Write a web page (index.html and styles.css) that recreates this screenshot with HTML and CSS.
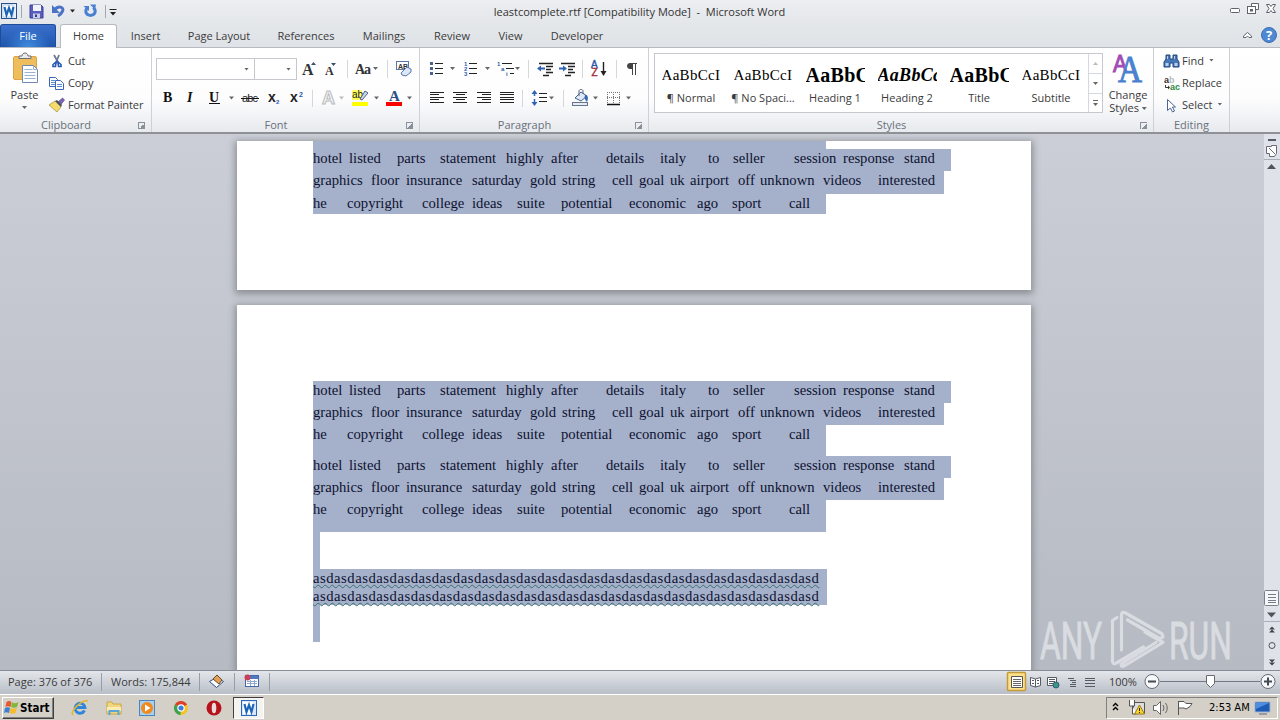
FILE: index.html
```html
<!DOCTYPE html>
<html lang="en">
<head>
    <meta charset="UTF-8">
    <meta name="viewport" content="width=device-width, initial-scale=1.0">
    <title>leastcomplete.rtf - Microsoft Word</title>
    <link rel="stylesheet" href="styles.css">
</head>
<body>
    <div class="window">
        <header class="titlebar">
            <svg class="quick" width="120" height="24" viewBox="0 0 120 24">
                <rect x="1.500" y="3.500" width="15" height="15" fill="#eaf3fc" stroke="#2b4f88"/>
                <path d="M3 5h10v12H3z" fill="#fff" stroke="#8fb2de" stroke-width=".6"/>
                <path d="M4.500 7l2 8 2.500-7 2.500 7 2-8" fill="none" stroke="#1c66b8" stroke-width="2.200"/>
                <path d="M21.500 5v13M105.500 5v13" stroke="#a3a7ae"/>
                <path d="M30 5h11l2 2v11H30z" fill="#5a5dbd" stroke="#3c3f95"/>
                <path d="M33 5h8v6h-8z" fill="#f1f3fa"/>
                <path d="M33 13.500h7V18h-7z" fill="#c9cde8"/>
                <path d="M35 14.500h2V17h-2z" fill="#34398e"/>
                <path d="M55 9c5-4 10-1 7 3-1 2-2 3-4 4" fill="none" stroke="#4a73c6" stroke-width="3"/>
                <path d="M52 5v8h8z" fill="#4a73c6"/>
                <path d="M70 9.500h5l-2.500 3zM110 12h6l-3 3.500z" fill="#222"/>
                <path d="M109.500 9.500h7" stroke="#222"/>
                <path d="M87.500 7.500c-4 5 0 8 3 8s7-3 3-8" fill="none" stroke="#4a80d4" stroke-width="3"/>
                <path d="M90 4.500h6l-1 5z M83.500 6h5.500v5z" fill="#4a80d4"/>
            </svg>
            <div class="window-title">leastcomplete.rtf [Compatibility Mode]&nbsp; -&nbsp; Microsoft Word</div>
            <svg width="52" height="24" viewBox="0 0 52 24" fill="none" stroke="#5c6470">
                <rect x="2.500" y="8.500" width="9" height="4" rx="1" fill="#fff"/>
                <path d="M23.500 6.500v-3h7v6h-3" fill="#fff"/>
                <rect x="19.500" y="6.500" width="8" height="7" fill="#fff"/>
                <rect x="22.500" y="9.500" width="2" height="1.500"/>
                <path d="M38.500 4.500h3l1.500 2 1.500-2h3l-2.500 4 2.500 4h-3l-1.500-2-1.500 2h-3l2.500-4z" fill="#fff"/>
            </svg>
        </header>

        <nav class="tabs">
            <div class="tab tab-file">File</div>
            <div class="tab tab-home">Home</div>
            <div class="tab tab-insert">Insert</div>
            <div class="tab tab-layout">Page Layout</div>
            <div class="tab tab-references">References</div>
            <div class="tab tab-mailings">Mailings</div>
            <div class="tab tab-review">Review</div>
            <div class="tab tab-view">View</div>
            <div class="tab tab-developer">Developer</div>
            <svg class="help" width="40" height="23" viewBox="0 0 40 23">
                <path d="M3.500 13.500v-1.500l4-3.500 4 3.500v1.500h-2.500l-1.500-1.500-1.500 1.500z" fill="#fff" stroke="#5c6470"/>
                <circle cx="29" cy="11" r="7.500" fill="#4f88d2" stroke="#3d6fb4"/>
                <text x="29" y="15.500" text-anchor="middle" font-family="Open Sans, sans-serif" font-size="13" font-weight="bold" fill="#fff">?</text>
            </svg>
        </nav>

        <section class="ribbon">
            <div class="group group-clipboard">
                <div class="group-body">
                    <div class="paste">
                        <svg width="28" height="36" viewBox="0 0 28 36">
                            <rect x="2.500" y="4.500" width="23" height="23" rx="1.500" fill="#f0bd5c" stroke="#dda548"/>
                            <path d="M8 6.500V4h3c0-4 6-4 6 0h3v2.500z" fill="#e8e9ea" stroke="#6c6f72"/>
                            <path d="M11.500 13.500h11l4 4v13h-15z" fill="#fff" stroke="#6d88b3"/>
                            <path d="M22.500 13.500v4h4M13.500 17.500h8M13.500 20.500h11M13.500 23.500h11M13.500 26.500h11" fill="none" stroke="#9db2d3"/>
                        </svg>
                        <span>Paste</span>
                        <i class="caret"></i>
                    </div>
                    <div class="list">
                        <div class="cmd">
                            <svg width="18" height="18" viewBox="0 0 18 18" fill="none">
                                <path d="M5 3l5 9M10 3L6.500 12" stroke="#6f7c92" stroke-width="1.800"/>
                                <path d="M7 10l-3 2.500v2h2.500zM9 10l3 2.500v2H9.500z" stroke="#2659b8" stroke-width="1.600"/>
                            </svg>
                            <span>Cut</span>
                        </div>
                        <div class="cmd">
                            <svg width="18" height="18" viewBox="0 0 18 18" fill="#fff" stroke="#3967b5">
                                <path d="M.5 3.500h6l2 2v7h-8z"/>
                                <path d="M6.500 6.500h5l3 3v6h-8z"/>
                                <path d="M2 6.500h4M2 8.500h4M2 10.500h4M8 10.500h5M8 12.500h5" stroke="#5d8ad4"/>
                            </svg>
                            <span>Copy</span>
                        </div>
                        <div class="cmd">
                            <svg width="18" height="18" viewBox="0 0 18 18">
                                <path d="M9 6l4.500-4 2 2-4 5z" fill="#7c66b8" stroke="#473577" stroke-width=".6"/>
                                <path d="M0 9l6-4 6 6-4 5z" fill="#f3dc6b" stroke="#a48c35" stroke-width=".7"/>
                                <path d="M6 5l2-1 5 5-1 2z" fill="#4e525c"/>
                            </svg>
                            <span>Format Painter</span>
                        </div>
                    </div>
                </div>
                <div class="group-label"><span>Clipboard</span><i class="launcher"></i></div>
            </div>

            <div class="group group-font">
                <div class="group-body rows">
                    <div class="row">
                        <div class="combo combo-name"><i class="caret"></i></div>
                        <div class="combo combo-size"><i class="caret"></i></div>
                        <svg width="120" height="22" viewBox="297 58 120 22">
                            <g font-family="Liberation Serif, serif" font-weight="bold" fill="#333">
                                <text x="302" y="75" font-size="16">A</text>
                                <text x="325" y="75" font-size="12">A</text>
                                <text x="355" y="74" font-size="14" textLength="16">Aa</text>
                            </g>
                            <path d="M311 65l2.500-3 2.500 3zM331 63h5l-2.500 3z" fill="#39506f"/>
                            <path d="M373 67h5l-2.500 3z" fill="#666"/>
                            <path d="M347.500 60v18M387.500 60v18" stroke="#d4d7db"/>
                            <rect x="396.500" y="61.500" width="12" height="8" fill="#fff" stroke="#5b77a5"/>
                            <text x="398" y="68.500" font-family="Liberation Sans, sans-serif" font-size="7" font-weight="bold" fill="#333">AB</text>
                            <path d="M401 73l6-6 4 2v3l-5 4-4-1z" fill="#dce7f7" stroke="#5b77a5"/>
                        </svg>
                    </div>
                    <div class="row">
                        <svg width="260" height="22" viewBox="156 87 260 22">
                            <g font-family="Liberation Serif, serif" fill="#111" font-size="14">
                                <text x="163" y="102" font-weight="bold">B</text>
                                <text x="187" y="102" font-style="italic" font-weight="bold">I</text>
                                <text x="209" y="102" font-weight="bold">U</text>
                            </g>
                            <path d="M209 103.500h11M241 98.500h18" stroke="#111"/>
                            <g font-family="Liberation Sans, sans-serif" font-weight="bold" fill="#222">
                                <text x="242" y="102" font-size="11" font-weight="normal" textLength="16">abc</text>
                                <text x="268" y="102" font-size="14">x</text>
                                <text x="290" y="102" font-size="14">x</text>
                                <text x="276" y="104" font-size="6" fill="#2a57b0">2</text>
                                <text x="299" y="97" font-size="7" fill="#2a57b0">2</text>
                            </g>
                            <path d="M229 96.500h5l-2.500 3zM374 96.500h5l-2.500 3zM407 96.500h5l-2.500 3z" fill="#666"/>
                            <path d="M339 96.500h5l-2.500 3z" fill="#bbb"/>
                            <path d="M312.500 90v17" stroke="#d4d7db"/>
                            <text x="322" y="104" font-family="Liberation Sans, sans-serif" font-size="18" font-weight="bold" fill="#f6f6f6" stroke="#b9bbbe">A</text>
                            <path d="M352 90h10v10h-10z" fill="#ffff62"/>
                            <text x="352" y="98" font-family="Liberation Sans, sans-serif" font-size="10" fill="#222">ab</text>
                            <path d="M360 99l5-8 3 2-6 7z" fill="#c9d6ea" stroke="#4c6287"/>
                            <path d="M352 102h16v4h-16z" fill="#ff0"/>
                            <text x="389" y="101" font-family="Liberation Serif, serif" font-size="15" font-weight="bold" fill="#2b4f86">A</text>
                            <path d="M386 102h16v4h-16z" fill="#f00"/>
                        </svg>
                    </div>
                </div>
                <div class="group-label"><span>Font</span><i class="launcher"></i></div>
            </div>

            <div class="group group-paragraph">
                <div class="group-body rows">
                    <div class="row">
                        <svg width="220" height="22" viewBox="424 58 220 22">
                            <path d="M435 63.500h8M435 68.500h8M435 73.500h8M469 63.500h8M469 68.500h8M469 73.500h8M502 63.500h10M506 68.500h8M510 73.500h4" stroke="#222"/>
                            <path d="M430 62h3v3h-3zM430 67h3v3h-3zM430 72h3v3h-3z" fill="#4a628c"/>
                            <g font-family="Liberation Sans, sans-serif" font-size="6" font-weight="bold" fill="#2f5fae">
                                <text x="464" y="66">1</text><text x="464" y="71">2</text><text x="464" y="76">3</text>
                                <text x="497" y="66">1</text><text x="501" y="71">a</text><text x="506" y="76">i</text>
                            </g>
                            <path d="M450 67h5l-2.500 3zM485 67h5l-2.500 3zM515 67h5l-2.500 3z" fill="#666"/>
                            <path d="M528.500 60v18M582.500 60v18M616.500 60v18" stroke="#d4d7db"/>
                            <path d="M539 63.500h14M546 66.500h7M546 69.500h5M546 72.500h7M543 75.500h6M561 63.500h14M568 66.500h7M568 69.500h5M568 72.500h7M565 75.500h6" stroke="#222" stroke-width="1.400"/>
                            <path d="M537 68.500l4-3v2h4v2h-4v2zM567 68.500l-4-3v2h-4v2h4v2z" fill="#2f63b7"/>
                            <g font-family="Liberation Sans, sans-serif" font-size="10">
                                <text x="591" y="68" fill="#2855a8" stroke="#2855a8" stroke-width=".4">A</text><text x="591.500" y="76" fill="#a12a35" stroke="#a12a35" stroke-width=".4">Z</text>
                            </g>
                            <path d="M603.500 62v10" stroke="#222" stroke-width="1.400"/><path d="M600.500 71h6l-3 5z" fill="#222"/>
                            <path d="M637 63.500h-6M632.500 63v12M635.500 63v12" stroke="#444"/><path d="M632 63h-2c-4 0-4 6 0 6h2z" fill="#444"/>
                        </svg>
                    </div>
                    <div class="row">
                        <svg width="220" height="22" viewBox="424 87 220 22">
                            <path d="M430 92.500h14M430 94.500h9M430 97.500h14M430 99.500h9M430 102.500h14
                                M453 92.500h14M456 94.500h9M453 97.500h14M456 99.500h9M453 102.500h14
                                M477 92.500h14M482 94.500h9M477 97.500h14M482 99.500h9M477 102.500h14
                                M500 92.500h14M500 94.500h14M500 97.500h14M500 99.500h14M500 102.500h14
                                M539 93.500h8M539 97.500h8M539 101.500h8" stroke="#222"/>
                            <path d="M522.500 90v17M563.500 90v17" stroke="#d4d7db"/>
                            <path d="M534.500 92v12" stroke="#2f63b7" stroke-width="1.500" stroke-dasharray="4 3"/>
                            <path d="M531.500 94l3-4 3 4zM531.500 102l3 4 3-4z" fill="#2f63b7"/>
                            <path d="M549 96.500h5l-2.500 3zM593 96.500h5l-2.500 3zM626 96.500h5l-2.500 3z" fill="#666"/>
                            <path d="M575 98l6-6 6 4-6 5z" fill="#dfe8f5" stroke="#3f618f"/>
                            <path d="M579 96v-5c0-2 4-2 4 0v3" fill="none" stroke="#55677f"/>
                            <path d="M585 95c4 0 3 4 2 7-2-2-3-4-2-7z" fill="#3369b4"/>
                            <rect x="572.500" y="102.500" width="15" height="3" fill="#e9edf3" stroke="#63758f"/>
                            <path d="M607 92.500h13M607 97.500h13M607.500 92v12M613.500 92v12M619.500 92v12" stroke="#777" stroke-dasharray="1 1"/>
                            <path d="M607 104.500h13" stroke="#111" stroke-width="1.500"/>
                        </svg>
                    </div>
                </div>
                <div class="group-label"><span>Paragraph</span><i class="launcher"></i></div>
            </div>

            <div class="group group-styles">
                <div class="group-body">
                    <div class="gallery">
                        <div class="style-item"><b class="sample">AaBbCcI</b><span>¶ Normal</span></div>
                        <div class="style-item"><b class="sample">AaBbCcI</b><span>¶ No Spaci...</span></div>
                        <div class="style-item"><b class="sample sample-heading">AaBbC</b><span>Heading 1</span></div>
                        <div class="style-item"><b class="sample sample-italic">AaBbCc</b><span>Heading 2</span></div>
                        <div class="style-item"><b class="sample sample-heading">AaBbC</b><span>Title</span></div>
                        <div class="style-item"><b class="sample">AaBbCcI</b><span>Subtitle</span></div>
                        <div class="gallery-scroll">
                            <div><i class="caret caret-up"></i></div>
                            <div><i class="caret"></i></div>
                            <div class="more"><i class="caret"></i></div>
                        </div>
                    </div>
                    <div class="change-styles">
                        <svg width="32" height="36" viewBox="0 0 32 36">
                            <text x="1" y="19" font-family="Liberation Sans, sans-serif" font-size="24" fill="#a14bb5" stroke="#a14bb5" textLength="14" lengthAdjust="spacingAndGlyphs">A</text>
                            <text x="6" y="29" font-family="Liberation Serif, serif" font-size="38" fill="#4a82cf" stroke="#4a82cf" textLength="24" lengthAdjust="spacingAndGlyphs">A</text>
                        </svg>
                        <span>Change</span>
                        <span>Styles <i class="caret"></i></span>
                    </div>
                </div>
                <div class="group-label"><span>Styles</span><i class="launcher"></i></div>
            </div>

            <div class="group group-editing">
                <div class="group-body">
                    <div class="list">
                        <div class="cmd">
                            <svg width="18" height="18" viewBox="0 0 18 18">
                                <path d="M3 3h4v4h3V3h4v4l2 3v5h-6v-4H7v4H1v-5l2-3z" fill="#4577b9" stroke="#24467c"/>
                                <path d="M2.500 11h3v3h-3zM11.500 11h3v3h-3zM4 4h1v3H4zM11 4h1v3h-1z" fill="#b8d0ef"/>
                            </svg>
                            <span>Find</span><i class="caret"></i>
                        </div>
                        <div class="cmd">
                            <svg width="18" height="18" viewBox="0 0 18 18" font-family="Liberation Sans, sans-serif" font-size="9" font-weight="bold">
                                <text x="1" y="9" fill="#333">a</text><text x="6" y="9" fill="#bbb">b</text>
                                <text x="7" y="16" fill="#2e8b3d">ac</text>
                                <path d="M2.500 11v2.500h3" fill="none" stroke="#333"/><path d="M5 11.500v4l2-2z" fill="#333"/>
                            </svg>
                            <span>Replace</span>
                        </div>
                        <div class="cmd">
                            <svg width="18" height="18" viewBox="0 0 18 18">
                                <path d="M4.500 3.500v11l3-2.500 2 4 2-1-2-4h3z" fill="#fff" stroke="#4a6696"/>
                            </svg>
                            <span>Select</span><i class="caret"></i>
                        </div>
                    </div>
                </div>
                <div class="group-label"><span>Editing</span></div>
            </div>
        </section>

        <main class="workspace">
            <div class="canvas">
                <div class="page page-first" id="firstPage"></div>
                <div class="page page-last" id="lastPage"></div>
                <svg class="watermark" width="200" height="64" viewBox="1036 606 200 64">
                    <g fill="#e8eaee" stroke="#e8eaee" stroke-width=".8" font-family="Roboto, sans-serif" font-size="51" font-weight="400">
                        <text x="1040" y="659" textLength="62" lengthAdjust="spacingAndGlyphs">ANY</text>
                        <text x="1169" y="659" textLength="63" lengthAdjust="spacingAndGlyphs">RUN</text>
                    </g>
                    <g fill="none" stroke="#e8eaee" stroke-width="3.200" stroke-linejoin="round" stroke-linecap="round">
                        <path d="M1117 617.500l-4.500 3V661q0 4 4 2l27-16"/>
                        <path d="M1121.500 650v-35q0-4 4-2l36 20.500q3 3 0 4.500h-3l-31-18"/>
                        <path d="M1145 632l18 10.500-38 23q-4 2-4-1l4-3 31-19"/>
                    </g>
                </svg>
            </div>
            <div class="scrollbar">
                <svg width="16" height="537" viewBox="1264 134 16 537">
                    <path d="M1268 140h8" stroke="#555c68" stroke-width="2"/>
                    <path d="M1266.500 146.500h5v-1h5v8l-2 3h-5v-3h-3zM1269 148l6 6" fill="#fff" stroke="#666c76"/>
                    <path d="M1264 159.500h16M1264 621.500h16" stroke="#aab0ba"/>
                    <path d="M1267 169h9l-4.500-5zM1267 612.500h9l-4.500 5z" fill="#50545c"/>
                    <rect x="1264.500" y="590.500" width="14" height="15" rx="1" fill="#f6f7f9" stroke="#7b828d"/>
                    <path d="M1268 594.500h8M1268 597.500h8M1268 600.500h8M1268 602.500h8" stroke="#777d88"/>
                    <path d="M1269 629.500h6l-3-3zM1269 632.500h6l-3-3zM1269 659.500h6l-3 3zM1269 662.500h6l-3 3z" fill="#40444c"/>
                    <circle cx="1272" cy="645.500" r="3" fill="#dfe2e6" stroke="#50545c"/>
                </svg>
            </div>
        </main>

        <footer class="statusbar">
            <div class="status-cell status-page">Page: 376 of 376</div>
            <div class="status-cell status-words">Words: 175,844</div>
            <div class="status-cell status-icon">
                <svg width="18" height="18" viewBox="0 0 18 18">
                    <path d="M1.500 8.500l7-4 7 4-7 6z" fill="#fff" stroke="#2f4d80"/>
                    <path d="M5 6l4-4 5 5-3 4z" fill="#e2a15a" stroke="#6b4a27"/>
                </svg>
            </div>
            <div class="status-cell status-icon">
                <svg width="18" height="18" viewBox="0 0 18 18">
                    <rect x="2.500" y="2.500" width="13" height="11" fill="#fff" stroke="#4469aa"/>
                    <path d="M3 3h12v3H3z" fill="#4f79c4"/><path d="M4 8.500h10M4 10.500h10M7.500 7v6M11.500 7v6" stroke="#8ea6d0"/>
                    <circle cx="4.500" cy="4.500" r="3" fill="#c9405a"/>
                </svg>
            </div>
            <svg class="views" width="97" height="23" viewBox="1004 670 97 23">
                <path d="M1003.500 673v17" stroke="#8d929b"/>
                <rect x="1007.500" y="671.500" width="18" height="18" rx="1" fill="#fce08a" stroke="#c59a3a" stroke-width="1.500"/>
                <path d="M1011.500 675.500h11v11h-11z" fill="#fff" stroke="#555"/>
                <path d="M1013 678.500h8M1013 680.500h8M1013 682.500h8M1013 684.500h8" stroke="#666"/>
                <path d="M1030.500 676.500l5 1.500 5-1.500v8l-5 1.500-5-1.500zM1035.500 678v8M1032 679.500h2M1032 682.500h2M1037 679.500h2M1037 682.500h2" fill="#fff" stroke="#555a63"/>
                <path d="M1047.500 676.500h9v8h-9zM1049 678.500h6M1049 680.500h6M1049 682.500h4" fill="#fff" stroke="#555a63"/>
                <circle cx="1056" cy="684" r="3" fill="#3c9678" stroke="#2b5c8c"/>
                <path d="M1068 677.500h6M1070 679.500h6M1072 681.500h4M1070 683.500h6M1070 685.500h6M1085 677.500h10M1085 679.500h10M1085 682.500h10M1085 685.500h10" stroke="#555a63"/>
            </svg>
            <div class="zoom-level">100%</div>
            <svg width="140" height="23" viewBox="1140 670 140 23">
                <path d="M1160 680.500h100" stroke="#747a84"/>
                <circle cx="1152" cy="680.500" r="7" fill="#f7f8f9" stroke="#646a74"/>
                <circle cx="1268" cy="680.500" r="7" fill="#f7f8f9" stroke="#646a74"/>
                <path d="M1148 680.500h8M1264 680.500h8M1268 676.500v8" stroke="#444a54" stroke-width="2"/>
                <path d="M1206.500 674.500h8v8l-4 4-4-4z" fill="#fff" stroke="#646a74"/>
            </svg>
        </footer>

        <div class="taskbar">
            <div class="start">
                <svg width="17" height="17" viewBox="0 0 17 17">
                    <path d="M3.500 3c2-1.500 3.500-1 5 0l-1 5c-2-1-3.500-1-5 0z" fill="#e5592d"/>
                    <path d="M9 3.500c2 1 4 1 6.500-.5l-1.500 5c-2 1-3.500 1-6 0z" fill="#7fb83b"/>
                    <path d="M2 9c2-1 3.500-1 5 0l-1 5c-2-1-3.500-1-5 0z" fill="#3d7fd6"/>
                    <path d="M7.500 9c2 1 4 1 6.500-.5L12.500 14c-2 1-3.500 1-6 0z" fill="#f5bd2d"/>
                </svg>
                <span>Start</span>
            </div>
            <div class="launch">
                <svg width="20" height="20" viewBox="0 0 20 20"><path d="M14.500 12.500a5 5 0 1 1 .5-3H6" fill="none" stroke="#2f86d8" stroke-width="2.800"/><path d="M3 17C-1 14 12 1 18 3" fill="none" stroke="#e6b52c" stroke-width="1.500"/></svg>
                <svg width="20" height="20" viewBox="0 0 20 20"><path d="M3 4h5l1 2h8v10H3z" fill="#f1d680" stroke="#c9a645"/><path d="M3 9h14v4H3z" fill="#fbecb2"/><path d="M5.500 17v-4h9v4" fill="none" stroke="#58a5d6" stroke-width="2"/></svg>
                <svg width="20" height="20" viewBox="0 0 20 20"><rect x="2.500" y="2.500" width="15" height="15" fill="#a8d0ef" stroke="#4b86b8"/><circle cx="10" cy="10" r="6" fill="#f08a1d"/><path d="M8 6.500v7l5.500-3.500z" fill="#fff"/></svg>
                <svg width="20" height="20" viewBox="0 0 20 20"><circle cx="10" cy="10" r="7" fill="#f4c522"/><path d="M10 10L3.900 6.500a7 7 0 0 1 12.200 0z" fill="#d9402f"/><path d="M10 10L3.900 6.500A7 7 0 0 0 9.500 17z" fill="#3da252"/><circle cx="10" cy="10" r="3.200" fill="#3f7ee0" stroke="#fff" stroke-width="1.200"/></svg>
                <svg width="20" height="20" viewBox="0 0 20 20"><circle cx="10" cy="10" r="7.500" fill="#b5121b"/><ellipse cx="10" cy="10" rx="2.300" ry="5.300" fill="#e9dcd9"/></svg>
            </div>
            <div class="task-active">
                <svg width="18" height="18" viewBox="0 0 18 18"><rect x="1.500" y="1.500" width="15" height="15" fill="#d9e8f8" stroke="#2b68b8"/><path d="M3 3h10v12H3z" fill="#fff"/><path d="M4.500 5l2 8 2.500-7 2.500 7 2-8" fill="none" stroke="#1c66b8" stroke-width="2.200"/></svg>
            </div>
            <div class="tray">
                <svg width="90" height="20" viewBox="1107 697 90 20">
                    <path d="M1113 705l2.500-2.500 2.500 2.500M1113 709l2.500-2.500 2.500 2.500" fill="none" stroke="#000" stroke-width="1.400"/>
                    <path d="M1133.500 701.500h11v11h-11z" fill="#ddd" stroke="#555"/>
                    <path d="M1129.500 699v6h5v-6M1132.500 705v8h4" fill="#fff" stroke="#555"/>
                    <path d="M1139.500 704l5 9h-10z" fill="#f8d52d" stroke="#9c7c13"/><path d="M1139.500 707v3M1139.500 711v1" stroke="#222"/>
                    <path d="M1153.500 704.500h3l4-4v13l-4-4h-3z" fill="#fff" stroke="#666"/>
                    <path d="M1163 704q2 3 0 6M1165.500 702q3.500 5 0 10" fill="none" stroke="#666"/>
                    <path d="M1178.500 714v-14M1179 700.500h5l2 2h6l-2 3-4 2.500-2-1h-5" fill="#fff" stroke="#555"/>
                </svg>
                <span class="clock">2:53 AM</span>
                <svg width="18" height="18" viewBox="0 0 18 18"><path d="M1 3h15v10H1z" fill="#1d5bb5" stroke="#9fb4d0"/><path d="M2 4h13L2 10z" fill="#4c8ee0"/><path d="M5 15h8" stroke="#667"/></svg>
            </div>
        </div>
    </div>
    <script>
        // [word, advance to the next word in px]
        const paragraph = [
            [["hotel",36],["listed",48],["parts",43],["statement",66],["highly",45],["after",55],["details",54],["italy",48],["to",25],["seller",61],["session",49],["response",61],["stand",32]],
            [["graphics",58],["floor",35],["insurance",66],["saturday",58],["gold",32],["string",50],["cell",27],["goal",31],["uk",20],["airport",48],["off",22],["unknown",63],["videos",55],["interested",58]],
            [["he",34],["copyright",75],["college",50],["ideas",45],["suite",44],["potential",68],["economic",68],["ago",35],["sport",57],["call",20]]
        ];
        const lineWidths = [638, 631, 513];

        function addLine(page, words, width, height, className){
            const line = document.createElement('div');
            line.className = 'line ' + (className || '');
            line.style.width = width + 'px';
            line.style.height = height + 'px';
            words.forEach((item)=>{
                const span = document.createElement('span');
                span.textContent = item[0];
                span.style.width = item[1] + 'px';
                line.appendChild(span);
            });
            page.appendChild(line);
        }

        function addParagraph(page, heights){
            for(var i=0;i<paragraph.length;i++){
                addLine(page, paragraph[i], lineWidths[i], heights[i]);
            }
        }

        const firstPage = document.getElementById('firstPage');
        const lastPage = document.getElementById('lastPage');
        const filler = [["asd".repeat(24), 508]];

        addLine(firstPage, [], 513, 8);
        addParagraph(firstPage, [22, 23, 20]);
        addParagraph(lastPage, [22, 22, 31]);
        addParagraph(lastPage, [22, 22, 32]);
        addLine(lastPage, [], 7, 37);
        addLine(lastPage, filler, 514, 18, 'misspelled');
        addLine(lastPage, filler, 514, 18, 'misspelled');
        addLine(lastPage, [], 7, 37);
    </script>
</body>
</html>
```

FILE: styles.css
```css
* {
    box-sizing: border-box;
    margin: 0;
    padding: 0;
}
body {
    width: 1280px;
    height: 720px;
    overflow: hidden;
    font-family: "Open Sans", sans-serif;
    font-size: 11px;
    color: #3b3b3b;
}
svg {
    display: block;
    flex: none;
}
.window {
    height: 720px;
    display: flex;
    flex-direction: column;
}

/* title bar and tabs */
.titlebar {
    height: 24px;
    display: flex;
    background: linear-gradient(#eceef1, #e4e7ea);
}
.window-title {
    flex: 1;
    padding-right: 69px;
    line-height: 24px;
    text-align: center;
    color: #333;
}
.tabs {
    height: 24px;
    display: flex;
    background: linear-gradient(#e4e7ea, #dfe2e6);
    border-bottom: 1px solid #b7bbc1;
}
.tab {
    line-height: 24px;
    text-align: center;
}
.tab-file {
    width: 56px;
    color: #fff;
    background: radial-gradient(ellipse at 50% 100%, #3f8be0, transparent 60%), linear-gradient(#3a70cc, #1f55ac);
    border: 1px solid #1e4c97;
    border-bottom: 0;
    border-radius: 3px 3px 0 0;
    line-height: 22px;
}
.tab-home {
    width: 57px;
    height: 24px;
    margin-left: 4px;
    background-color: #fff;
    border: 1px solid #b7bbc1;
    border-bottom: 0;
    border-radius: 3px 3px 0 0;
    line-height: 22px;
}
.tab-insert {
    width: 57px;
}
.tab-layout {
    width: 90px;
}
.tab-references {
    width: 84px;
}
.tab-mailings {
    width: 72px;
}
.tab-review {
    width: 64px;
}
.tab-view {
    width: 53px;
}
.tab-developer {
    width: 80px;
}
.help {
    margin-left: auto;
}

/* ribbon */
.ribbon {
    height: 86px;
    display: flex;
    background: linear-gradient(#fff, #fdfdfe 60%, #e7eaee);
    border-bottom: 2px solid #8e9297;
}
.group {
    display: flex;
    flex-direction: column;
    border-right: 1px solid #cdd1d6;
}
.group-clipboard {
    width: 152px;
}
.group-font {
    width: 268px;
}
.group-paragraph {
    width: 229px;
}
.group-styles {
    width: 505px;
}
.group-editing {
    width: 76px;
}
.group-body {
    height: 70px;
    display: flex;
}
.group-label {
    height: 14px;
    display: flex;
    align-items: center;
    color: #6a707a;
    line-height: 14px;
}
.group-label span {
    flex: 1;
    margin-left: -6px;
    text-align: center;
}
.group-editing .group-label span {
    margin-left: 0;
}
.launcher {
    width: 7px;
    height: 7px;
    margin-right: 6px;
    border-top: 1px solid #8a9099;
    border-left: 1px solid #8a9099;
    background: linear-gradient(135deg, transparent 50%, #8a9099 50%);
}
.caret {
    display: inline-block;
    width: 5px;
    height: 3px;
    background-color: #666;
    clip-path: polygon(0 0, 100% 0, 50% 100%);
}
.caret-up {
    background-color: #bbb;
    clip-path: polygon(0 100%, 100% 100%, 50% 0);
}
.paste {
    width: 49px;
    padding: 4px 0 0;
    display: flex;
    flex-direction: column;
    align-items: center;
}
.paste span {
    line-height: 13px;
}
.paste .caret {
    margin-top: 5px;
}
.list {
    padding-top: 2px;
    display: flex;
    flex-direction: column;
}
.cmd {
    height: 22px;
    display: flex;
    align-items: center;
    white-space: nowrap;
}
.cmd span {
    margin: -2px 0 0 1px;
}
.cmd .caret {
    margin: -2px 0 0 5px;
}
.group-clipboard .cmd span {
    letter-spacing: -.1px;
}
.group-editing .list {
    padding-left: 9px;
}
.rows {
    flex-direction: column;
    padding: 10px 0 0 4px;
    gap: 7px;
}
.row {
    height: 22px;
    display: flex;
}
.combo {
    height: 22px;
    display: flex;
    align-items: center;
    justify-content: flex-end;
    padding-right: 5px;
    background-color: #fff;
    border: 1px solid #c5c9ce;
}
.combo-name {
    width: 99px;
}
.combo-size {
    width: 43px;
    margin-left: -1px;
}
.gallery {
    width: 449px;
    height: 60px;
    margin: 5px 0 0 5px;
    display: flex;
    background-color: #fff;
    border: 1px solid #c5c9ce;
}
.style-item {
    width: 72px;
    display: flex;
    flex-direction: column;
    align-items: center;
    white-space: nowrap;
}
.sample {
    width: 59px;
    height: 36px;
    overflow: hidden;
    font-family: "Liberation Serif", serif;
    font-size: 15px;
    font-weight: normal;
    line-height: 43px;
    letter-spacing: .3px;
    color: #000;
}
.sample-heading {
    font-size: 20px;
    font-weight: bold;
}
.sample-italic {
    font-size: 18px;
    font-weight: bold;
    font-style: italic;
}
.gallery-scroll {
    width: 14px;
    margin-left: auto;
    border-left: 1px solid #d5d8dc;
}
.gallery-scroll div {
    height: 20px;
    display: flex;
    align-items: center;
    justify-content: center;
    border-bottom: 1px solid #d5d8dc;
}
.gallery-scroll .more {
    height: 18px;
    border-bottom: 0;
}
.more .caret {
    height: 6px;
    clip-path: polygon(0 0, 100% 0, 100% 1px, 0 1px, 0 3px, 100% 3px, 50% 100%, 0 3px);
}
.change-styles {
    width: 50px;
    padding-top: 5px;
    display: flex;
    flex-direction: column;
    align-items: center;
}
.change-styles span {
    line-height: 13px;
    white-space: nowrap;
}
.change-styles svg {
    margin-bottom: -1px;
}
.change-styles .caret {
    margin-bottom: 2px;
}

/* document area */
.workspace {
    height: 536px;
    display: flex;
}
.canvas {
    position: relative;
    flex: 1;
    overflow: hidden;
    padding: 7px 0 0 237px;
    background: linear-gradient(#cbced6, #b6bac3);
}
.page {
    width: 794px;
    padding-left: 76px;
    background-color: #fff;
    box-shadow: 0 2px 7px 2px #8b8f94;
}
.page-first {
    height: 149px;
}
.page-last {
    height: 400px;
    margin-top: 15px;
    padding-top: 76px;
}
.line {
    display: flex;
    background-color: #a5b0ca;
    font-family: "Liberation Serif", serif;
    font-size: 14.67px;
    line-height: 18px;
    color: #0d1230;
    white-space: nowrap;
}
.line span {
    flex: none;
}
.misspelled {
    letter-spacing: .52px;
    text-decoration: underline wavy #39706b 1px;
    text-underline-offset: 1px;
}
.watermark {
    position: absolute;
    left: 1036px;
    top: 472px;
    opacity: .7;
}
.scrollbar {
    width: 16px;
    background-color: #dfe2e8;
}

/* status bar */
.statusbar {
    height: 24px;
    display: flex;
    align-items: flex-start;
    background: linear-gradient(#e3e6ea, #b9bec7);
    border-top: 1px solid #888d95;
}
.status-cell {
    height: 18px;
    margin-top: 2px;
    line-height: 17px;
    border-right: 1px solid #989da6;
    white-space: nowrap;
}
.status-page {
    width: 102px;
    padding-left: 8px;
}
.status-words {
    width: 98px;
    padding-left: 9px;
}
.status-icon {
    width: 35px;
    display: flex;
    align-items: center;
    justify-content: center;
}
.views {
    margin-left: auto;
}
.zoom-level {
    width: 39px;
    padding-left: 8px;
    line-height: 21px;
}

/* taskbar */
.taskbar {
    height: 26px;
    display: flex;
    align-items: center;
    background-color: #d4d0c8;
    border-top: 1px solid #fff;
}
.start {
    width: 52px;
    height: 22px;
    margin-left: 2px;
    display: flex;
    align-items: center;
    border: 1px solid #404040;
    border-top-color: #fff;
    border-left-color: #fff;
    box-shadow: inset -1px -1px #808080;
    font-family: "DejaVu Sans Condensed", "DejaVu Sans", sans-serif;
    font-size: 11.5px;
    font-weight: bold;
    color: #000;
}
.launch {
    margin-left: 16px;
    display: flex;
    gap: 13.5px;
}
.task-active {
    width: 31px;
    height: 22px;
    margin-left: 9px;
    display: flex;
    align-items: center;
    justify-content: center;
    background-color: #f4f3f0;
    border: 1px solid #404040;
    border-right-color: #fff;
    border-bottom-color: #fff;
}
.tray {
    width: 172px;
    height: 22px;
    margin: 0 2px 0 auto;
    display: flex;
    align-items: center;
    border: 1px solid #808080;
    border-right-color: #fff;
    border-bottom-color: #fff;
}
.clock {
    width: 57px;
    padding-left: 12px;
    font-family: "DejaVu Sans Condensed", "DejaVu Sans", sans-serif;
    font-size: 11px;
    white-space: nowrap;
    color: #000;
}
```
